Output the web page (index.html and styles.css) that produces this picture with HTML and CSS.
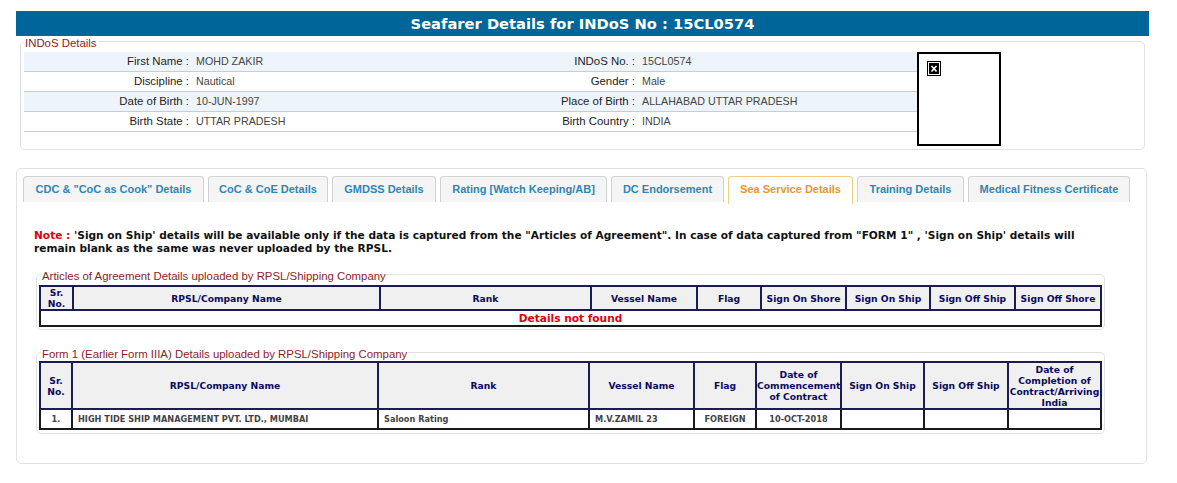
FILE: index.html
```html
<!DOCTYPE html>
<html lang="en">
<head>
<meta charset="utf-8">
<title>Seafarer Details</title>
<link rel="stylesheet" href="styles.css">
</head>
<body>
<div class="page">
  <h1 class="title">Seafarer Details for INDoS No : 15CL0574</h1>
  <fieldset class="box indos">
    <legend class="box-legend">INDoS Details</legend>
    <div class="indos-body">
      <div class="rows">
        <div class="row shade"><span class="lab l1">First Name :</span><span class="val v1">MOHD ZAKIR</span><span class="lab l2">INDoS No. :</span><span class="val">15CL0574</span></div>
        <div class="row"><span class="lab l1">Discipline :</span><span class="val v1">Nautical</span><span class="lab l2">Gender :</span><span class="val">Male</span></div>
        <div class="row shade"><span class="lab l1">Date of Birth :</span><span class="val v1">10-JUN-1997</span><span class="lab l2">Place of Birth :</span><span class="val">ALLAHABAD UTTAR PRADESH</span></div>
        <div class="row"><span class="lab l1">Birth State :</span><span class="val v1">UTTAR PRADESH</span><span class="lab l2">Birth Country :</span><span class="val">INDIA</span></div>
      </div>
      <div class="photo">
        <svg class="broken" viewBox="0 0 14 15" width="14" height="15" aria-hidden="true">
          <rect x="0.5" y="0.5" width="13" height="14" fill="#fff" stroke="#000"/>
          <rect x="2" y="2" width="10" height="11" fill="#000"/>
          <path d="M4.5 5 L9.5 10.5 M9.5 5 L4.5 10.5" stroke="#fff" stroke-width="1.6"/>
        </svg>
      </div>
    </div>
  </fieldset>

  <section class="panel">
    <nav class="tabs">
      <a class="tab t1">CDC &amp; "CoC as Cook" Details</a>
      <a class="tab t2">CoC &amp; CoE Details</a>
      <a class="tab t3">GMDSS Details</a>
      <a class="tab t4">Rating [Watch Keeping/AB]</a>
      <a class="tab t5">DC Endorsement</a>
      <a class="tab t6 active">Sea Service Details</a>
      <a class="tab t7">Training Details</a>
      <a class="tab t8">Medical Fitness Certificate</a>
    </nav>
    <p class="note"><span class="note-key">Note :</span> 'Sign on Ship' details will be available only if the data is captured from the "Articles of Agreement". In case of data captured from "FORM 1" , 'Sign on Ship' details will remain blank as the same was never uploaded by the RPSL.</p>

    <fieldset class="box sub first">
      <legend class="box-legend">Articles of Agreement Details uploaded by RPSL/Shipping Company</legend>
      <table class="grid g1">
        <colgroup><col class="a1"><col class="a2"><col class="a3"><col class="a4"><col class="a5"><col class="a6"><col class="a7"><col class="a8"><col class="a9"></colgroup>
        <thead><tr><th>Sr.<br>No.</th><th>RPSL/Company Name</th><th>Rank</th><th>Vessel Name</th><th>Flag</th><th>Sign On Shore</th><th>Sign On Ship</th><th>Sign Off Ship</th><th>Sign Off Shore</th></tr></thead>
        <tbody><tr><td class="none" colspan="9">Details not found</td></tr></tbody>
      </table>
    </fieldset>

    <fieldset class="box sub second">
      <legend class="box-legend">Form 1 (Earlier Form IIIA) Details uploaded by RPSL/Shipping Company</legend>
      <table class="grid g2">
        <colgroup><col class="b1"><col class="b2"><col class="b3"><col class="b4"><col class="b5"><col class="b6"><col class="b7"><col class="b8"><col class="b9"></colgroup>
        <thead><tr><th>Sr.<br>No.</th><th>RPSL/Company Name</th><th>Rank</th><th>Vessel Name</th><th>Flag</th><th>Date of Commencement of Contract</th><th>Sign On Ship</th><th>Sign Off Ship</th><th>Date of Completion of Contract/Arriving India</th></tr></thead>
        <tbody><tr><td class="ctr">1.</td><td>HIGH TIDE SHIP MANAGEMENT PVT. LTD., MUMBAI</td><td>Saloon Rating</td><td>M.V.ZAMIL 23</td><td class="ctr">FOREIGN</td><td class="ctr">10-OCT-2018</td><td></td><td></td><td></td></tr></tbody>
      </table>
    </fieldset>
  </section>
</div>
</body>
</html>
```

FILE: styles.css
```css
* { box-sizing: border-box; }
html, body { margin: 0; padding: 0; background: #fff; }
body { font-family: "Liberation Sans", Arial, sans-serif; color: #333; }
.page { width: 1133px; margin-left: 16px; padding-top: 11px; }

.title {
  margin: 0; height: 25px;
  background: #006699; color: #fff; text-align: center;
  font: bold 14.7px/25px "DejaVu Sans", Verdana, sans-serif;
}

.box { margin: 0; min-width: 0; border: 1px solid #dfe1e3; border-radius: 5px; }
.box-legend {
  padding: 4px 1px 0; margin-left: 0;
  font-size: 11.4px; line-height: 13px; color: #8c1c24;
}

.indos { width: 1125px; margin: -3px 0 0 4px; padding: 2px 0 0 3px; height: 117px; }
.indos-body { display: flex; }
.rows { width: 893px; }
.row { display: flex; height: 20px; border-bottom: 1px solid #c9cdd2; font-size: 10.7px; line-height: 19px; }
.row.shade { background: #eef4fb; }
.lab { text-align: right; color: #222; flex: none; font-size: 11.4px; }
.l1 { width: 165px; }
.l2 { width: 245px; }
.val { padding-left: 7px; color: #444; flex: none; }
.v1 { width: 201px; }

.photo { width: 84px; height: 94px; border: 2px solid #000; background: #fff; flex: none; padding: 7px 0 0 8px; }
.broken { display: block; }

.panel {
  margin-top: 18px; width: 1131px; height: 296px;
  border: 1px solid #dfe1e3; border-radius: 5px; padding: 7px 0 0 6px;
}
.tabs { display: flex; height: 26px; }
.tab {
  display: block; flex: none; height: 26px; margin-right: 4px;
  border: 1px solid #cfd2d4; border-bottom: 0; border-radius: 4px 4px 0 0;
  background: #f5f5f5; color: #2e86b5;
  font-size: 11px; font-weight: bold; line-height: 25px; text-align: center; white-space: nowrap;
}
.tab.active { background: #fff; border-color: #f0cf7c; color: #e8962e; height: 28px; }
.t1 { width: 181px; } .t2 { width: 120px; } .t3 { width: 104px; } .t4 { width: 167px; }
.t5 { width: 113px; } .t6 { width: 125px; } .t7 { width: 107px; } .t8 { width: 162px; }

.note {
  margin: 27px 50px 0 11px;
  font: bold 10.6px/13px "DejaVu Sans", Verdana, sans-serif; color: #111;
}
.note-key { color: #e00010; }

.sub { width: 1069px; margin: 0 0 0 13px; padding: 2px 3px 0 2px; }
.sub .box-legend { margin-left: 2px; }
.first { margin-top: 11px; height: 64px; }
.second { margin-top: 14px; height: 90px; padding-top: 0; }

.grid { table-layout: fixed; width: 1061px; border-collapse: collapse; border: 2px solid #1a1a1a; font-family: "DejaVu Sans", Verdana, sans-serif; }
.grid th {
  background: #f0f0f0; border: 2px solid #1c1c54; padding: 0;
  color: #0a0a60; font-size: 9.2px; font-weight: bold; line-height: 11px; text-align: center;
}
.grid td { border: 2px solid #1a1a1a; padding: 0 0 0 5px; font-size: 8.2px; font-weight: bold; color: #444; }
.grid td.ctr { text-align: center; padding: 0; }
.grid td.none { text-align: center; color: #e00010; font-size: 10.6px; height: 16px; padding: 0; }
.g1 th { height: 24px; }
.g2 th { height: 47px; }
.g2 td { height: 20px; }

.a1 { width: 33px; } .a2 { width: 307px; } .a3 { width: 211px; } .a4 { width: 106px; } .a5 { width: 64px; }
.a6 { width: 85px; } .a7 { width: 84px; } .a8 { width: 85px; } .a9 { width: 86px; }
.b1 { width: 32px; } .b2 { width: 306px; } .b3 { width: 211px; } .b4 { width: 105px; } .b5 { width: 62px; }
.b6 { width: 85px; } .b7 { width: 83px; } .b8 { width: 84px; } .b9 { width: 93px; }
```
